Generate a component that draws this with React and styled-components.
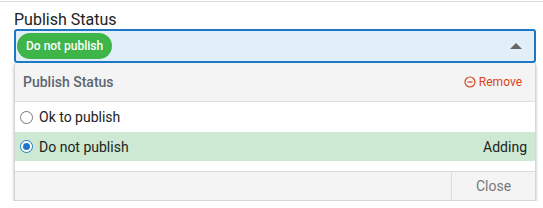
import React from "react";
import styled, { createGlobalStyle } from "styled-components";

const Global = createGlobalStyle`
  html, body { margin: 0; padding: 0; background: #fff; }
  body { font-family: Roboto, "Liberation Sans", sans-serif; }
`;

const Page = styled.div`
  margin-top: 1px;
  border-top: 1px solid #dcdcdc;
  padding: 8px 7px 0 14px;
`;

const Label = styled.div`
  font-size: 16px;
  line-height: 19px;
  color: #222;
`;

const Select = styled.div`
  height: 30px;
  border: 2px solid #1c78c4;
  border-radius: 3px;
  background: #e2eef8;
  display: flex;
  align-items: center;
  padding: 0 0 0 1px;
  position: relative;
`;

const Pill = styled.span`
  display: inline-flex;
  align-items: center;
  height: 26px;
  padding: 0 9px;
  border-radius: 13px;
  background: #3db549;
  color: #fff;
  font-size: 12px;
  font-weight: 500;
`;

const Arrow = styled.span`
  margin-left: auto;
  margin-right: 12px;
  width: 0;
  height: 0;
  border-left: 6px solid transparent;
  border-right: 6px solid transparent;
  border-bottom: 6px solid #666;
`;

const Menu = styled.div`
  background: #fff;
  border: 1px solid #d6d6d6;
  border-top: none;
  border-radius: 0 0 3px 3px;
  box-shadow: 0 2px 3px rgba(0, 0, 0, 0.3);
`;

const Header = styled.div`
  height: 38px;
  background: #f4f4f4;
  border-bottom: 1px solid #e0e0e0;
  display: flex;
  align-items: center;
  justify-content: space-between;
  padding: 0 13px 0 8px;
`;

const HeaderTitle = styled.span`
  font-size: 14px;
  font-weight: 500;
  color: #5c6670;
`;

const Remove = styled.span`
  display: inline-flex;
  align-items: center;
  gap: 3px;
  font-size: 12px;
  color: #d8441a;
`;

const Option = styled.div`
  height: ${(p) => p.h}px;
  display: flex;
  align-items: center;
  padding: 0 8px 0 5px;
  background: ${(p) => (p.selected ? "#cde9d3" : "#fff")};
  font-size: 14px;
  color: #222;
`;

const Radio = styled.span`
  width: 11px;
  height: 11px;
  border-radius: 50%;
  border: 1px solid ${(p) => (p.checked ? "#1c78c4" : "#777")};
  display: inline-flex;
  align-items: center;
  justify-content: center;
  margin-right: 6px;
  background: #fff;
  &::after {
    content: "";
    display: ${(p) => (p.checked ? "block" : "none")};
    width: 7px;
    height: 7px;
    border-radius: 50%;
    background: #1c78c4;
  }
`;

const Status = styled.span`
  margin-left: auto;
`;

const Spacer = styled.div`
  height: 10px;
`;

const Footer = styled.div`
  height: 28px;
  border-top: 1px solid #dcdcdc;
  background: #f4f4f4;
  display: flex;
  justify-content: flex-end;
`;

const CloseButton = styled.button`
  width: 84px;
  border: none;
  border-left: 1px solid #dcdcdc;
  background: transparent;
  font-family: inherit;
  font-size: 14px;
  color: #777;
  padding: 0;
`;

export default function App() {
  return (
    <>
      <Global />
      <Page>
        <Label>Publish Status</Label>
        <Select>
          <Pill>Do not publish</Pill>
          <Arrow />
        </Select>
        <Menu>
          <Header>
            <HeaderTitle>Publish Status</HeaderTitle>
            <Remove>
              <svg width="12" height="12" viewBox="0 0 12 12">
                <circle cx="6" cy="6" r="5" fill="none" stroke="#d8441a" strokeWidth="1.2" />
                <line x1="3.5" y1="6" x2="8.5" y2="6" stroke="#d8441a" strokeWidth="1.2" />
              </svg>
              Remove
            </Remove>
          </Header>
          <Option h={30}>
            <Radio />
            Ok to publish
          </Option>
          <Option h={29} selected>
            <Radio checked />
            Do not publish
            <Status>Adding</Status>
          </Option>
          <Spacer />
          <Footer>
            <CloseButton>Close</CloseButton>
          </Footer>
        </Menu>
      </Page>
    </>
  );
}
